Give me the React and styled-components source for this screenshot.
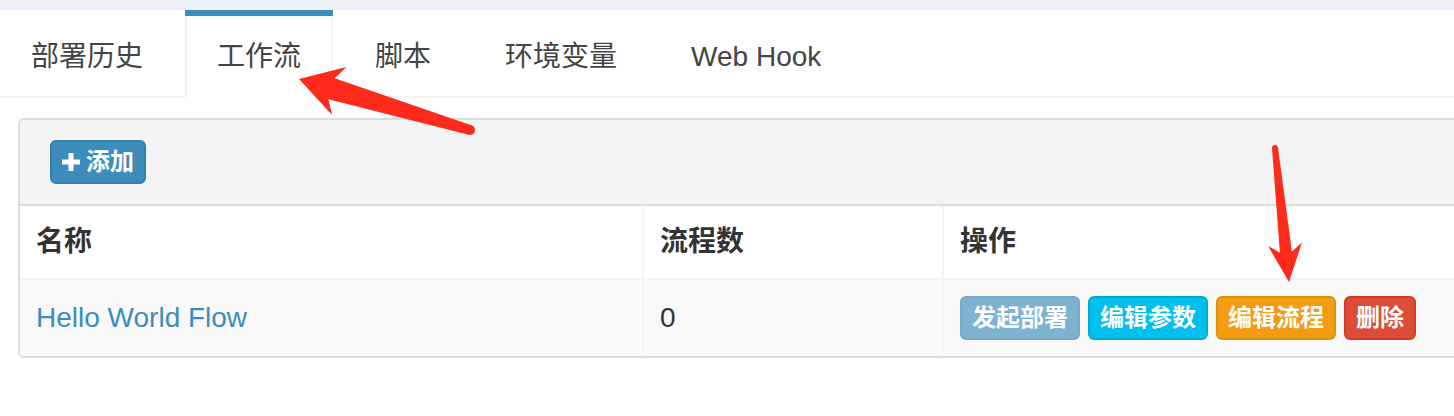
import React from 'react';
import styled, { createGlobalStyle } from 'styled-components';

const GlobalStyle = createGlobalStyle`
  html, body {
    margin: 0;
    padding: 0;
    background: #fff;
    overflow: hidden;
  }
  body {
    font-family: "Liberation Sans", "Noto Sans CJK SC", sans-serif;
    color: #333;
  }
`;

const Page = styled.div`
  position: relative;
  width: 1454px;
  height: 416px;
  overflow: hidden;
`;

const TopStrip = styled.div`
  height: 10px;
  background: #ecf0f5;
`;

const TabList = styled.ul`
  display: flex;
  margin: 0;
  padding: 0;
  list-style: none;
  border-bottom: 2px solid #f4f4f4;
  background: #fff;
  border-top-left-radius: 4px;
`;

const TabItem = styled.li`
  margin-right: 10px;
  margin-bottom: -2px;
  border-top: 6px solid ${({ active }) => (active ? '#3c8dbc' : 'transparent')};
  &:first-child {
    margin-left: -1px;
  }
`;

const TabLink = styled.a`
  display: block;
  padding: 21px 30px 19px;
  font-size: 28px;
  line-height: 40px;
  color: #444;
  text-decoration: none;
  background: ${({ active }) => (active ? '#fff' : 'transparent')};
  border-left: 2px solid ${({ active }) => (active ? '#f4f4f4' : 'transparent')};
  border-right: 2px solid ${({ active }) => (active ? '#f4f4f4' : 'transparent')};
  border-bottom: 2px solid ${({ active }) => (active ? '#fff' : 'transparent')};
`;

const Content = styled.div`
  padding: 20px 0 0 18px;
`;

const Box = styled.div`
  width: 1480px;
  border: 2px solid #dddddd;
  border-radius: 6px;
  background: #fff;
  overflow: hidden;
`;

const BoxHeader = styled.div`
  display: flex;
  align-items: center;
  padding: 20px 30px;
  background: #f4f4f4;
  border-bottom: 2px solid #dddddd;
`;

const Btn = styled.button`
  display: inline-flex;
  align-items: center;
  gap: 6px;
  height: 44px;
  padding: 0 10px;
  font-family: "Liberation Sans", "Noto Sans CJK SC", sans-serif;
  font-size: 24px;
  font-weight: 700;
  line-height: 36px;
  color: #fff;
  background: ${({ bg }) => bg};
  border: 2px solid ${({ bd }) => bd};
  border-radius: 6px;
  opacity: ${({ disabled }) => (disabled ? 0.65 : 1)};
  cursor: pointer;
`;

const Table = styled.table`
  width: 100%;
  border-collapse: collapse;
  table-layout: fixed;
`;

const Th = styled.th`
  padding: 16px 16px;
  font-size: 28px;
  line-height: 40px;
  font-weight: 700;
  color: #333;
  text-align: left;
  background: #fff;
  border-right: 2px solid #f4f4f4;
  border-bottom: 2px solid #f4f4f4;
`;

const Td = styled.td`
  padding: 16px 16px 16px;
  font-size: 28px;
  line-height: 40px;
  color: #333;
  background: #f9f9f9;
  border-right: 2px solid #f4f4f4;
`;

const NameLink = styled.a`
  color: #3c8dbc;
  text-decoration: none;
`;

const Actions = styled.div`
  display: flex;
  gap: 8px;
`;

const Overlay = styled.svg`
  position: absolute;
  left: 0;
  top: 0;
  pointer-events: none;
`;

const PlusIcon = () => (
  <svg width="18" height="18" viewBox="0 0 18 18">
    <rect x="6.5" y="0" width="5" height="18" fill="#fff" />
    <rect x="0" y="6.5" width="18" height="5" fill="#fff" />
  </svg>
);

// tapered arrow polygon from tail to tip
function arrowPoints(tail, tip, tailW, neckW, headW, headLen, neckLen) {
  const dx = tip[0] - tail[0];
  const dy = tip[1] - tail[1];
  const len = Math.hypot(dx, dy);
  const u = [dx / len, dy / len];
  const n = [-u[1], u[0]];
  const at = (d, s) => [tip[0] - u[0] * d + n[0] * s, tip[1] - u[1] * d + n[1] * s];
  const pts = [
    [tail[0] + n[0] * tailW / 2, tail[1] + n[1] * tailW / 2],
    at(neckLen, neckW / 2),
    at(headLen, headW / 2),
    tip,
    at(headLen, -headW / 2),
    at(neckLen, -neckW / 2),
    [tail[0] - n[0] * tailW / 2, tail[1] - n[1] * tailW / 2],
  ];
  return pts.map((p) => p.map((v) => v.toFixed(1)).join(',')).join(' ');
}

const Arrow = ({ tail, tip, tailW, neckW, headW, headLen, neckLen }) => (
  <g fill="#fe2a1c">
    <circle cx={tail[0]} cy={tail[1]} r={tailW / 2} />
    <polygon points={arrowPoints(tail, tip, tailW, neckW, headW, headLen, neckLen)} />
  </g>
);

const tabs = ['部署历史', '工作流', '脚本', '环境变量', 'Web Hook'];

const actions = [
  { label: '发起部署', bg: '#3c8dbc', bd: '#367fa9', disabled: true },
  { label: '编辑参数', bg: '#00c0ef', bd: '#00acd6' },
  { label: '编辑流程', bg: '#f39c12', bd: '#e08e0b' },
  { label: '删除', bg: '#dd4b39', bd: '#d73925' },
];

export default function App() {
  return (
    <Page>
      <GlobalStyle />
      <TopStrip />
      <TabList>
        {tabs.map((t) => (
          <TabItem key={t} active={t === '工作流'}>
            <TabLink href="#" active={t === '工作流'}>{t}</TabLink>
          </TabItem>
        ))}
      </TabList>
      <Content>
        <Box>
          <BoxHeader>
            <Btn bg="#3c8dbc" bd="#367fa9">
              <PlusIcon />
              添加
            </Btn>
          </BoxHeader>
          <Table>
            <colgroup>
              <col style={{ width: 623 }} />
              <col style={{ width: 300 }} />
              <col />
            </colgroup>
            <thead>
              <tr>
                <Th>名称</Th>
                <Th>流程数</Th>
                <Th>操作</Th>
              </tr>
            </thead>
            <tbody>
              <tr>
                <Td><NameLink href="#">Hello World Flow</NameLink></Td>
                <Td>0</Td>
                <Td>
                  <Actions>
                    {actions.map((a) => (
                      <Btn key={a.label} bg={a.bg} bd={a.bd} disabled={a.disabled}>
                        {a.label}
                      </Btn>
                    ))}
                  </Actions>
                </Td>
              </tr>
            </tbody>
          </Table>
        </Box>
      </Content>
      <Overlay width="1454" height="416">
        <Arrow tail={[470, 130]} tip={[299, 79]} tailW={10} neckW={22} headW={50} headLen={42} neckLen={34} />
        <Arrow tail={[1275, 148]} tip={[1289, 282]} tailW={6} neckW={12} headW={34} headLen={38} neckLen={30} />
      </Overlay>
    </Page>
  );
}
